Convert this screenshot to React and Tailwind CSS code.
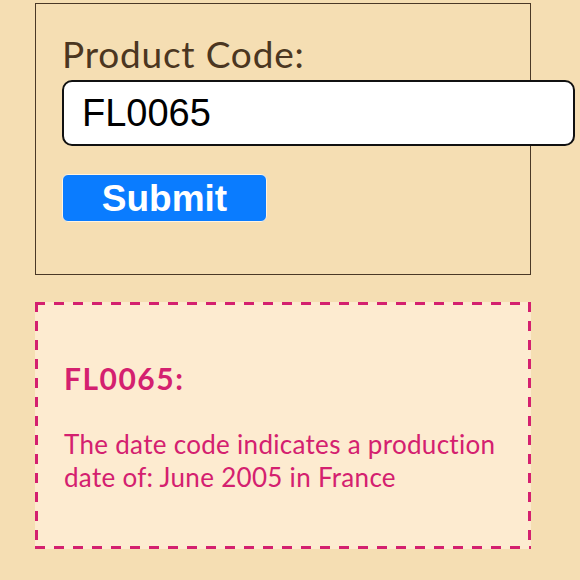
export default function App() {
  return (
    <div className="min-h-[580px] w-[580px] bg-[#f5deb3] overflow-hidden pt-[3px]" style={{ fontFamily: 'Lato, "Noto Sans", sans-serif' }}>
      <div className="ml-[35px] w-[496px] border border-[#4a3826] pt-[28px] pb-[52px] pl-[26px]">
        <div className="text-[37px] leading-[44px] tracking-[0.8px] text-[#4b3621]">Product Code:</div>
        <div className="mt-[4px] w-[513px] h-[66px] bg-white border-2 border-[#111] rounded-[10px] flex items-center pl-[18px] text-[38px] text-black" style={{ fontFamily: '"Liberation Sans", Arial, sans-serif' }}>
          FL0065
        </div>
        <button className="mt-[28px] w-[205px] h-[48px] bg-[#0a7cff] border border-[#fff3e0] rounded-[6px] text-white font-bold text-[37px] leading-none flex items-center justify-center" style={{ fontFamily: '"Liberation Sans", Arial, sans-serif' }}>
          Submit
        </button>
      </div>
      <div className="ml-[35px] mt-[27px] w-[496px] h-[247px] [background:repeating-linear-gradient(90deg,#d4206f_0_10px,transparent_10px_19px)_top_left/100%_3px_no-repeat,repeating-linear-gradient(90deg,#d4206f_0_10px,transparent_10px_19px)_bottom_left/100%_3px_no-repeat,repeating-linear-gradient(180deg,#d4206f_0_10px,transparent_10px_19px)_top_left/3px_100%_no-repeat,repeating-linear-gradient(180deg,#d4206f_0_10px,transparent_10px_19px)_top_right/3px_100%_no-repeat,#fdebd0] pt-[58px] pl-[29px] pr-[29px] text-[#d4206f]">
        <div className="text-[30px] leading-[36px] font-bold tracking-[1.5px]">FL0065:</div>
        <div className="mt-[32px] text-[26px] leading-[33px] tracking-[0.3px]">The date code indicates a production date of: June 2005 in France</div>
      </div>
    </div>
  );
}
